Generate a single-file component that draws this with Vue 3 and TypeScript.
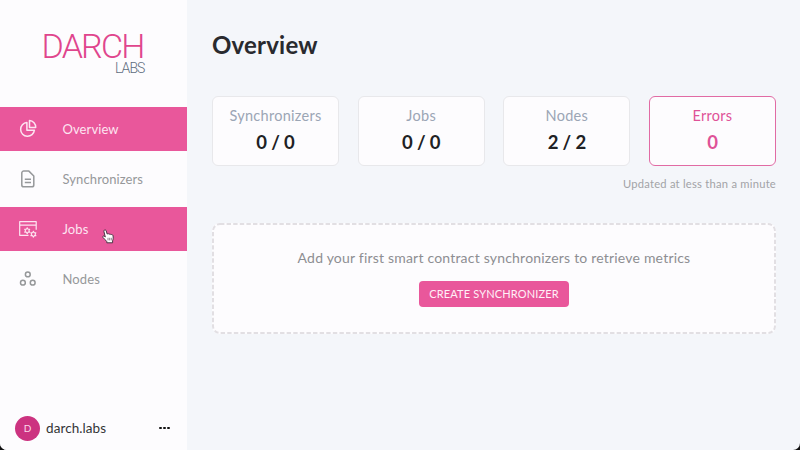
<script setup lang="ts">
interface NavItem {
  label: string
  icon: 'pie' | 'file' | 'jobs' | 'nodes'
  active: boolean
}

interface Stat {
  label: string
  value: string
  error?: boolean
}

const navItems: NavItem[] = [
  { label: 'Overview', icon: 'pie', active: true },
  { label: 'Synchronizers', icon: 'file', active: false },
  { label: 'Jobs', icon: 'jobs', active: true },
  { label: 'Nodes', icon: 'nodes', active: false },
]

const stats: Stat[] = [
  { label: 'Synchronizers', value: '0 / 0' },
  { label: 'Jobs', value: '0 / 0' },
  { label: 'Nodes', value: '2 / 2' },
  { label: 'Errors', value: '0', error: true },
]

const gear = 'M0-2.9.85-1.47 2.5-1.45 1.7 0 2.5 1.45.85 1.47 0 2.9-.85 1.47-2.5 1.45-1.7 0-2.5-1.45-.85-1.47z'
</script>

<template>
  <div class="window">
    <div class="app">
      <aside class="sidebar">
        <div class="logo">
          <span class="logo-main">DARCH</span>
          <span class="logo-sub">LABS</span>
        </div>
        <nav class="nav">
          <a v-for="item in navItems" :key="item.label" class="nav-item" :class="{ active: item.active }">
            <svg class="nav-icon" width="20" height="20" viewBox="0 0 20 20" fill="none" stroke="currentColor" stroke-width="1.5" stroke-linejoin="round">
              <template v-if="item.icon === 'pie'">
                <path d="M8.900 3.500a6.900 6.900 0 1 0 7.500 7.700H8.900z" />
                <path d="M11.500 1.500v6.900h6.200a6.500 6.500 0 0 0-6.200-6.900z" />
              </template>
              <template v-else-if="item.icon === 'file'">
                <path d="M5.700 2.100h5.200l4.900 4.900v8.900a1.900 1.900 0 0 1-1.900 1.900H5.700a1.900 1.900 0 0 1-1.900-1.900V4a1.900 1.900 0 0 1 1.900-1.900z" />
                <path d="M6.800 10.200h6.200M6.800 13.400h6.200" />
              </template>
              <template v-else-if="item.icon === 'jobs'">
                <path d="M10.500 16.300H1.700V2.700h16.500v8M1.700 6.200h16.500" stroke-width="1.200" />
                <path :d="gear" transform="translate(9.200 11.700)" stroke-width="1.100" />
                <path :d="gear" transform="translate(15.400 15.200)" stroke-width="1.100" />
              </template>
              <template v-else>
                <circle cx="9.800" cy="5.400" r="2.400" />
                <circle cx="4.900" cy="13.700" r="2.400" />
                <circle cx="14.700" cy="13.700" r="2.400" />
              </template>
            </svg>
            <span class="nav-label">{{ item.label }}</span>
          </a>
        </nav>
        <footer class="account">
          <span class="avatar">D</span>
          <span class="account-name">darch.labs</span>
          <span class="more"><i></i><i></i><i></i></span>
        </footer>
      </aside>

      <main class="content">
        <h1 class="title">Overview</h1>
        <section class="stats">
          <article v-for="stat in stats" :key="stat.label" class="stat" :class="{ error: stat.error }">
            <span class="stat-label">{{ stat.label }}</span>
            <strong class="stat-value">{{ stat.value }}</strong>
          </article>
        </section>
        <p class="updated">Updated at less than a minute</p>
        <section class="empty">
          <svg class="empty-outline" width="564" height="111" viewBox="0 0 564 111" fill="none">
            <rect x="1" y="1" width="562" height="109" rx="7" stroke="#e2dfe3" stroke-width="2" stroke-dasharray="4.400 2.200" />
          </svg>
          <p class="empty-text">Add your first smart contract synchronizers to retrieve metrics</p>
          <button class="create" type="button">CREATE SYNCHRONIZER</button>
        </section>
      </main>

      <svg class="pointer" width="12" height="15" viewBox="0 0 12 15" fill="#fff" stroke="#493443" stroke-width="1" stroke-linejoin="round">
        <path d="M2.300 1.200c.8-.6 1.600-.2 1.900.6l1 3.300c.6-.7 1.500-.5 1.900.2.600-.5 1.500-.3 1.800.4.800-.4 1.900-.1 2.100.9.400 2 .2 3.700-.4 5.200v2H4.800v-1.200C3.400 11 2.300 9.700 1 8.500c-.8-.8.200-2 1.300-1.300l1 .8L1.900 2.500c-.1-.5 0-1 .4-1.300z" />
        <path d="M6 8.800v2.600M7.700 8.800v2.600M9.300 8.800v2.600" stroke-width=".6" />
      </svg>
    </div>
  </div>
</template>

<style>
body {
  margin: 0;
  background: #111;
}
</style>

<style scoped>
.window {
  width: 800px;
  height: 450px;
  background: #111;
  font-family: Lato, "Liberation Sans", sans-serif;
}
.app {
  position: relative;
  display: flex;
  height: 450px;
  overflow: hidden;
  border-radius: 0 0 7px 7px;
  background: #f4f6fa;
}
.sidebar {
  display: flex;
  flex-direction: column;
  flex: none;
  width: 187px;
  background: #fdfcfe;
}
.logo {
  display: flex;
  flex-direction: column;
  box-sizing: border-box;
  height: 107px;
  padding: 29px 0 0 41.500px;
  font-family: Roboto, sans-serif;
  font-weight: 300;
}
.logo-main {
  font-size: 34px;
  line-height: 34px;
  letter-spacing: -1.800px;
  color: #e0458d;
}
.logo-sub {
  width: 103px;
  text-align: right;
  font-size: 14px;
  line-height: 11px;
  letter-spacing: -0.900px;
  color: #5f6d80;
}
.nav {
  display: flex;
  flex-direction: column;
  gap: 6px;
}
.nav-item {
  display: flex;
  align-items: center;
  gap: 24.500px;
  height: 44px;
  padding-left: 18px;
  color: #96989a;
  font-size: 13px;
}
.nav-item.active {
  color: #fde5f1;
  background: #e9579b;
}
.nav-icon {
  flex: none;
}
.nav-label {
  padding-bottom: 1px;
  letter-spacing: 0.100px;
}
.account {
  display: flex;
  align-items: center;
  margin-top: auto;
  padding: 0 17px 9px 15px;
  height: 26px;
}
.avatar {
  display: flex;
  align-items: center;
  justify-content: center;
  width: 25px;
  height: 25px;
  border-radius: 50%;
  background: #cc3380;
  color: #fbd9ea;
  font-size: 10px;
}
.account-name {
  margin-left: 6px;
  font-size: 13.500px;
  letter-spacing: 0.080px;
  color: #333436;
}
.more {
  display: flex;
  gap: 1.300px;
  margin-left: auto;
}
.more i {
  width: 2.800px;
  height: 2.800px;
  border-radius: 50%;
  background: #111;
}
.content {
  flex: 1;
  padding: 31px 24px 0 25px;
}
.title {
  margin: 0;
  font-size: 24px;
  line-height: 28px;
  font-weight: 700;
  letter-spacing: 0.200px;
  color: #292a2e;
}
.stats {
  display: grid;
  grid-template-columns: repeat(4, 1fr);
  gap: 18.660px;
  margin-top: 37px;
}
.stat {
  display: flex;
  flex-direction: column;
  align-items: center;
  box-sizing: border-box;
  height: 70px;
  padding-top: 10px;
  border: 1px solid #e8e8eb;
  border-radius: 6px;
  background: #fdfcfe;
}
.stat-label {
  font-size: 14.500px;
  line-height: 18px;
  letter-spacing: 0.280px;
  color: #9ba5b5;
}
.stat-value {
  margin-top: 4.500px;
  font-size: 18.500px;
  line-height: 24px;
  letter-spacing: -0.150px;
  color: #202124;
}
.stat.error {
  border-color: #e16ba4;
}
.error .stat-label,
.error .stat-value {
  color: #df5297;
}
.updated {
  margin: 10px 0 0;
  text-align: right;
  font-size: 11.200px;
  line-height: 16px;
  letter-spacing: 0.240px;
  color: #a2a3a6;
}
.empty {
  position: relative;
  display: flex;
  flex-direction: column;
  align-items: center;
  box-sizing: border-box;
  height: 111px;
  margin-top: 31px;
  padding-top: 26px;
  border-radius: 8px;
  background: #fdfcfe;
}
.empty-outline {
  position: absolute;
  inset: 0;
}
.empty-text {
  margin: 0;
  font-size: 14px;
  line-height: 18px;
  letter-spacing: 0.200px;
  color: #8d8e92;
}
.create {
  width: 150px;
  height: 26px;
  margin-top: 14px;
  padding: 0;
  border: 0;
  border-radius: 4px;
  background: #e9579b;
  color: #fff0f7;
  font-family: inherit;
  font-size: 11px;
  line-height: 24px;
  letter-spacing: 0.150px;
}
.pointer {
  position: absolute;
  left: 102px;
  top: 229px;
}
</style>
